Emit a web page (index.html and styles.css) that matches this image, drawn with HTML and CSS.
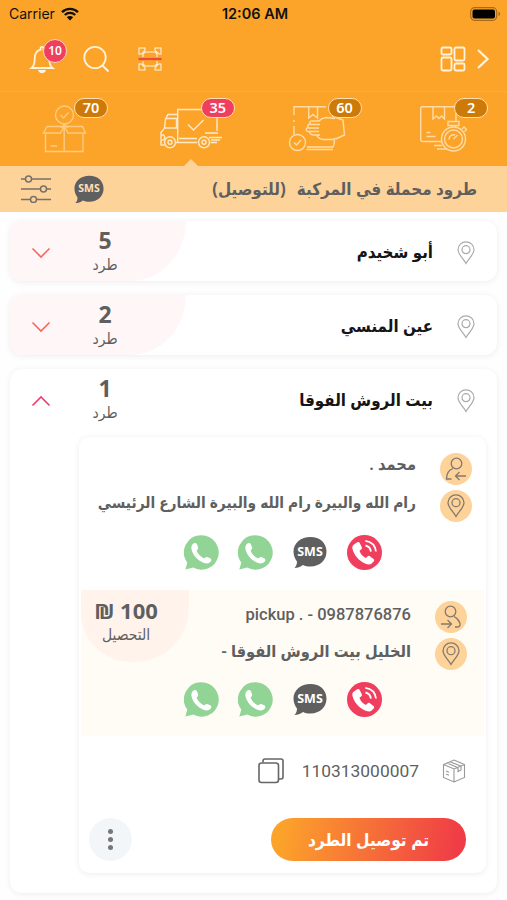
FILE: index.html
```html
<!DOCTYPE html>
<html lang="ar" dir="rtl">

<head>
    <meta charset="UTF-8">
    <meta name="viewport" content="width=device-width, initial-scale=1.0">
    <title>طرود محملة في المركبة</title>
    <link rel="stylesheet" href="styles.css">
</head>

<body>
    <!-- shared icons -->
    <svg class="sprite" width="0" height="0">
        <symbol id="pin" viewBox="0 0 18 24">
            <path d="M9 22.500C6 17.500 1 13 1 8.700a8 7.800 0 0 1 16 0C17 13 12 17.500 9 22.500z" />
            <circle cx="9" cy="8.700" r="4" />
        </symbol>
        <symbol id="sms" viewBox="0 0 34 34">
            <path d="M17.500 2C27 2 33.500 8 33.500 16.500S27 31.500 17.500 31.500c-3 0-5.300-.5-7.500-1.500-2.500 2-5.500 3-8.500 3 1.800-2 2.500-4 2.500-6.500C2 24 .5 20.500.5 16.500.5 8 8 2 17.500 2z" />
        </symbol>
        <symbol id="whatsapp" viewBox="0 0 35 35">
            <path fill="#92d396" d="M17.500.3a17.200 17.200 0 1 1-8.200 32.300L1.300 34.500l2-6.800A17.200 17.200 0 0 1 17.500.3z" />
            <path fill="#fff" d="M9.500 8.500c1.500-1 3-.4 3.600 1l1 3c.4 1.300-.8 2.200-1.500 3.200 1.500 3.500 4 6 7.500 7.800 1-.8 1.800-2 3.200-1.500l3 1.300c1.200.7 1.500 2 .5 3.200-1.700 2.200-4.500 2.400-7.300 1.200C14 25.500 9.500 21 7.800 15.500c-.9-3-.5-5.500 1.700-7z" />
        </symbol>
        <symbol id="call" viewBox="0 0 35 35">
            <circle cx="17.500" cy="17.500" r="17.500" fill="#ef3e5e" />
            <path fill="#fff" d="M7.300 9.300 10.300 7.200c1-.5 1.900-.2 2.400.8l2.100 4.200c.4 1 .1 1.700-.7 2.300l-1.600 1.200c1 3.200 3 5.500 6.300 7.200l1.700-1.500c.8-.7 1.600-.7 2.400-.1l3.600 2.700c.9.7.9 1.600.2 2.500l-2.300 2.300c-1.500 1.200-3.600.8-6.400-.4C11.500 25.500 7 20 5.500 14c-.5-2-.1-3.600 1.800-4.700z" />
            <path class="wave" d="M18.500 10.500c3 .7 5 3 5.400 6.200M18.300 5.800c6 .8 10 4.900 10.700 10.700" />
        </symbol>
    </svg>

    <header class="header">
        <div class="status-bar" dir="ltr">
            <div class="carrier">Carrier
                <svg width="18" height="14" viewBox="0 0 18 14">
                    <path d="M1 5.200a11.500 11.500 0 0 1 16 0M3.800 8a7.500 7.500 0 0 1 10.400 0" fill="none" stroke="#111" stroke-width="2.300" />
                    <path d="M9 13.500 5.800 10.300a4.600 4.600 0 0 1 6.400 0z" fill="#111" />
                </svg>
            </div>
            <div class="time">12:06 AM</div>
            <svg class="battery" width="31" height="14" viewBox="0 0 31 14">
                <rect x=".7" y=".7" width="26" height="12.600" rx="4" fill="none" stroke="#a86a17" stroke-width="1.200" />
                <rect x="2.500" y="2.500" width="22.500" height="9" rx="2" fill="#000" />
                <path d="M28.500 4.800v4.400c2-.6 2-3.800 0-4.400z" fill="#a86a17" />
            </svg>
        </div>

        <div class="toolbar">
            <svg class="line-icon back" width="14" height="22" viewBox="0 0 14 22">
                <path d="M2 2l9.500 9L2 20" />
            </svg>
            <svg class="line-icon grid" width="26" height="26" viewBox="0 0 26 26">
                <rect x="1.500" y="1.500" width="10" height="7" rx="1.500" />
                <rect x="1.500" y="11.500" width="10" height="13" rx="1.500" />
                <rect x="14.500" y="1.500" width="10" height="13" rx="1.500" />
                <rect x="14.500" y="17.500" width="10" height="7" rx="1.500" />
            </svg>
            <svg class="line-icon scan" width="26" height="26" viewBox="0 0 26 26">
                <path d="M2 8V2h6v2L4.500 8zM18 2h6v6h-2l-4-3.500zM2 18v6h6v-2l-3.500-4zM24 18v6h-6v-2l3.500-4zM6 11V8l2-2h10l2 2v3M6 15v3l2 2h10l2-2v-3" />
                <path class="scan-line" d="M1.500 13h23" />
            </svg>
            <svg class="line-icon search" width="28" height="28" viewBox="0 0 28 28">
                <circle cx="13" cy="12.500" r="10.700" />
                <path d="M20.500 20.500l6 6" />
            </svg>
            <div class="bell">
                <svg class="line-icon" width="26" height="30" viewBox="0 0 26 30">
                    <path d="M2.500 24c2.700-2 3.200-5 3.200-9.200 0-5 2-8.100 5.800-9.100V4.300c0-2 3-2 3 0v1.400c3.800 1 5.800 4.100 5.800 9.100 0 4.200.5 7.200 3.200 9.200z" />
                    <path d="M10.500 27c1 1.800 4 1.800 5 0z" />
                </svg>
                <span class="bell-count">10</span>
            </div>
        </div>

        <nav class="tabs">
            <div class="tab">
                <svg class="tab-icon" width="76" height="52" viewBox="0 0 76 52">
                    <path d="M35 39.500H17q-2.300 0-2.300-2.300V6.500q0-1.700 1.700-1.700H50V19M27 5v12l3.500-3 2.500 2.500 2.500-2.500 3 3V5M20.500 30.500h4M20.500 34.500h9M28 43.500h8M31 47h10M34.500 39.500H36" />
                    <circle cx="47.500" cy="37" r="12" />
                    <circle cx="47.500" cy="37" r="9" />
                    <path d="M42 19.500h11v4H42zM46 23.500v2M49.500 23.500v2M56 27l2-2 2.500 2.500-2 2M43 37.500a4.500 4.500 0 0 1 6-4.500M47.500 37l4-4" />
                </svg>
                <span class="badge">2</span>
            </div>
            <div class="tab">
                <svg class="tab-icon" width="76" height="52" viewBox="0 0 76 52">
                    <path d="M15 13V4.800h32M15 18v2M15 24v9M29.700 5v11l4.300-3.500 4.500 3.500V5M28 45h26q1.500-3 1.500-7M27.500 47.500H54" />
                    <circle cx="18.500" cy="40.500" r="8" />
                    <path d="M15 40.500l2.500 2.500 4.500-5M56 16.500l-9-1q-4.500.5-7 3.500h-8q-2.500 1.500 0 3.500h-2.500q-2 2 .5 3.500h-2q-2 2 .5 3.500h2q0 3 4 3.500h3q2 4 7 4.500h9l3-1M32 22.500h9M30 26h10M30 29.500h10M34 33h7" />
                    <path d="M53 14l11 4 1.500 15-9 4" />
                </svg>
                <span class="badge">60</span>
            </div>
            <div class="tab active">
                <svg class="tab-icon" width="76" height="52" viewBox="0 0 76 52">
                    <path d="M25.700 40V7.500H65V29M25.700 12.500H16L13.500 17 12.500 26 9 30.500V43h3.500M14 16.500h10.500v9.500H13M9 33h2.500q3 3-.5 5H9M24 40.500h21M27 36.500h18M58.500 40.500H65M53 31h13M57 35.500h13M59 38h9" />
                    <circle cx="18" cy="40.300" r="5.500" />
                    <circle cx="18" cy="40.300" r="2" />
                    <circle cx="52" cy="40.300" r="5.500" />
                    <circle cx="52" cy="40.300" r="2" />
                    <path d="M36 22.500l5.500 5.500 10-10" />
                </svg>
                <span class="badge">35</span>
            </div>
            <div class="tab">
                <svg class="tab-icon faded" width="76" height="52" viewBox="0 0 76 52">
                    <circle cx="39.500" cy="13" r="9" />
                    <path d="M35.500 13l3 3 5-5.500M20.500 31v18.500h37.500V31M39.200 24v25.500M22 24.500h35.500l3 6.500H43l-3.800-6.500L35.500 31H18.500zM36 26l3.500-4 3.500 4M25.500 44H32" />
                </svg>
                <span class="badge">70</span>
            </div>
        </nav>
    </header>

    <div class="title-bar">
        <h1><span>طرود محملة في المركبة</span><span>(للتوصيل)</span></h1>
        <div class="sms small">
            <svg width="30" height="30"><use href="#sms" /></svg>
            <span>SMS</span>
        </div>
        <svg class="filter" width="32" height="28" viewBox="0 0 32 28">
            <path d="M1 4h4.500M11.500 4H31M1 14h19.500M26.500 14H31M1 24.500h9.500M16.500 24.500H31" />
            <circle cx="8.500" cy="4" r="3" />
            <circle cx="23.500" cy="14" r="3" />
            <circle cx="13.500" cy="24.500" r="3" />
        </svg>
    </div>

    <main class="list">
        <section class="card closed">
            <div class="card-row">
                <svg class="pin" width="18" height="24"><use href="#pin" /></svg>
                <h2>أبو شخيدم</h2>
                <div class="count"><b>5</b><span>طرد</span></div>
                <svg class="arrow" width="20" height="12" viewBox="0 0 20 12"><path d="M1.500 1.500L10 10l8.500-8.500" /></svg>
            </div>
        </section>

        <section class="card closed">
            <div class="card-row">
                <svg class="pin" width="18" height="24"><use href="#pin" /></svg>
                <h2>عين المنسي</h2>
                <div class="count"><b>2</b><span>طرد</span></div>
                <svg class="arrow" width="20" height="12" viewBox="0 0 20 12"><path d="M1.500 1.500L10 10l8.500-8.500" /></svg>
            </div>
        </section>

        <section class="card">
            <div class="card-row">
                <svg class="pin" width="18" height="24"><use href="#pin" /></svg>
                <h2>بيت الروش الفوقا</h2>
                <div class="count"><b>1</b><span>طرد</span></div>
                <svg class="arrow up" width="20" height="12" viewBox="0 0 20 12"><path d="M1.500 10.500L10 2l8.500 8.500" /></svg>
            </div>

            <div class="parcel">
                <div class="party receiver">
                    <div class="line">
                        <div class="round">
                            <svg width="24" height="26" viewBox="0 0 24 26">
                                <circle cx="12.500" cy="7.500" r="5.300" />
                                <path d="M9 12.500C4.500 14 2.500 18 2.500 23h5M22 20H11.500M15.500 16l-4 4 4 4" />
                            </svg>
                        </div>
                        <p class="name">محمد .</p>
                    </div>
                    <div class="line">
                        <div class="round"><svg width="18" height="24"><use href="#pin" /></svg></div>
                        <p class="address">رام الله والبيرة رام الله والبيرة الشارع الرئيسي</p>
                    </div>
                    <div class="actions">
                        <svg width="35" height="35"><use href="#call" /></svg>
                        <div class="sms">
                            <svg width="34" height="34"><use href="#sms" /></svg>
                            <span>SMS</span>
                        </div>
                        <svg width="35" height="35"><use href="#whatsapp" /></svg>
                        <svg width="35" height="35"><use href="#whatsapp" /></svg>
                    </div>
                </div>

                <div class="party sender">
                    <div class="amount"><b dir="ltr">₪ 100</b><span>التحصيل</span></div>
                    <div class="line">
                        <div class="round">
                            <svg width="24" height="26" viewBox="0 0 24 26">
                                <circle cx="11.500" cy="7.500" r="5.300" />
                                <path d="M15 12.500c6 3 8 10 4 10.500h-3M2 20h10.500M8.500 16l4 4-4 4" />
                            </svg>
                        </div>
                        <p class="phone" dir="ltr">pickup . - 0987876876</p>
                    </div>
                    <div class="line">
                        <div class="round"><svg width="18" height="24"><use href="#pin" /></svg></div>
                        <p>الخليل بيت الروش الفوقا -</p>
                    </div>
                    <div class="actions">
                        <svg width="35" height="35"><use href="#call" /></svg>
                        <div class="sms">
                            <svg width="34" height="34"><use href="#sms" /></svg>
                            <span>SMS</span>
                        </div>
                        <svg width="35" height="35"><use href="#whatsapp" /></svg>
                        <svg width="35" height="35"><use href="#whatsapp" /></svg>
                    </div>
                </div>

                <div class="barcode">
                    <svg class="box" width="24" height="24" viewBox="0 0 24 24">
                        <path d="M12 1l10.500 4.500v13L12 23 1.500 18.500v-13zM1.500 5.500L12 10l10.500-4.500M12 10v13M5 4l10.500 4.500M8 2.700L18.500 7M16 8.500v4l3-1.500V7M4 12l3 1.200M4 15l3 1.200" />
                    </svg>
                    <span>110313000007</span>
                    <svg class="copy" width="26" height="26" viewBox="0 0 26 26">
                        <rect x="1" y="5" width="19.500" height="19.500" rx="2.500" />
                        <path d="M5 4.500V3q0-2 2-2h16q2 0 2 2v16q0 2-2 2h-2" />
                    </svg>
                </div>

                <div class="footer">
                    <button class="btn">تم توصيل الطرد</button>
                    <button class="more"><i></i><i></i><i></i></button>
                </div>
            </div>
        </section>
    </main>
</body>

</html>
```
FILE: styles.css
```css
:root {
    --orange: #fca42a;
    --peach: #fed399;
    --grey: #5f5f60;
    --red: #ef3e5e;
}

* {
    box-sizing: border-box;
}

body {
    margin: 0;
    height: 900px;
    overflow: hidden;
    background-color: #fefefe;
    color: var(--grey);
    font-family: "Noto Sans", "DejaVu Sans Condensed", "DejaVu Sans", sans-serif;
}

h1,
h2,
p {
    margin: 0;
}

svg {
    display: block;
    flex-shrink: 0;
}

.sprite {
    position: absolute;
}

/* header */
.header {
    height: 166px;
    background-color: var(--orange);
}

.status-bar {
    height: 27px;
    padding: 0 6px 0 9px;
    display: flex;
    align-items: center;
    justify-content: space-between;
    color: #111;
    font-family: Inter, sans-serif;
    font-size: 14px;
}

.carrier {
    width: 100px;
    display: flex;
    align-items: center;
    gap: 6px;
}

.time {
    font-size: 14.5px;
    font-weight: 600;
}

.status-bar .battery {
    margin-left: 69px;
}

.toolbar {
    height: 65px;
    padding: 0 17px 0 29px;
    display: flex;
    align-items: center;
    border-bottom: 1px solid #fdac3e;
}

.line-icon {
    fill: none;
    stroke: #fff3dc;
    stroke-width: 1.8;
}

.back {
    stroke-width: 2.3;
}

.grid {
    margin-right: 10px;
}

.scan {
    margin-right: auto;
    stroke-width: 1.1;
}

.scan-line {
    stroke: #f0483e;
    stroke-width: 2.2;
}

.search {
    margin-right: 27px;
}

.bell {
    position: relative;
    margin-right: 27px;
}

.bell-count {
    position: absolute;
    left: 14px;
    top: -5px;
    width: 24px;
    height: 24px;
    border: 1.5px solid #ffd9c0;
    border-radius: 50%;
    background-color: var(--red);
    color: #fff;
    font-size: 12px;
    font-weight: 600;
    line-height: 21px;
    text-align: center;
}

.tabs {
    display: flex;
    height: 74px;
}

.tab {
    flex: 1;
    display: flex;
    justify-content: center;
    padding-top: 10px;
    position: relative;
}

.tab-icon {
    fill: none;
    stroke: #ffdca6;
    stroke-width: 1.4;
}

.active .tab-icon {
    stroke: #ffe9c8;
}

.tab-icon.faded {
    stroke: #fecb80;
}

.badge {
    position: absolute;
    left: 74px;
    top: 6px;
    width: 34px;
    height: 20px;
    border: 1.5px solid #ffe0ae;
    border-radius: 10px;
    background-color: #cd7a08;
    color: #fff;
    font-size: 14.5px;
    font-weight: 600;
    line-height: 17px;
    text-align: center;
}

.active .badge {
    background-color: var(--red);
}

.active::after {
    content: '';
    position: absolute;
    bottom: 0;
    left: 57px;
    border: 7px solid transparent;
    border-top: 0;
    border-bottom-color: var(--peach);
}

/* title bar */
.title-bar {
    height: 46px;
    padding: 0 30px 0 20px;
    display: flex;
    align-items: center;
    background-color: var(--peach);
}

.title-bar h1 {
    display: flex;
    gap: 11px;
    margin-left: auto;
    font-size: 16.9px;
    line-height: 24px;
}

.filter {
    margin-right: 22px;
    fill: none;
    stroke: #77716b;
    stroke-width: 1.5;
}

.sms {
    position: relative;
    width: 35px;
    fill: #5f5f60;
}

.actions .sms svg {
    margin-right: 1px;
}

.sms span {
    position: absolute;
    left: 0;
    top: 0;
    width: 35px;
    color: #fff;
    font-size: 12.5px;
    font-weight: 700;
    line-height: 33px;
    text-align: center;
}

.sms.small {
    width: 30px;
}

.small span {
    width: 30px;
    color: #fee0b8;
    font-size: 10.5px;
    line-height: 29px;
}

/* cards */
.list {
    padding: 9px 10px 0;
}

.card {
    margin-bottom: 14px;
    border-radius: 12px;
    background-color: #fff;
    box-shadow: 0 1px 6px rgba(0, 0, 0, 0.07);
    overflow: hidden;
}

.card-row {
    height: 60px;
    padding: 0 22px 0 21px;
    display: flex;
    align-items: center;
    position: relative;
}

.closed .card-row::before {
    content: '';
    position: absolute;
    left: 0;
    top: 0;
    width: 176px;
    height: 60px;
    border-bottom-right-radius: 60px 65px;
    background-color: #fff7f7;
}

.pin {
    margin-top: 3px;
    fill: none;
    stroke: #aaa;
    stroke-width: 1.2;
}

.card h2 {
    flex: 1;
    margin-right: 24px;
    color: #151515;
    font-size: 16.8px;
}

.count {
    width: 60px;
    display: flex;
    flex-direction: column;
    align-items: center;
    position: relative;
}

.count b {
    font-size: 23px;
    line-height: 26px;
}

.count span {
    font-size: 15.5px;
    line-height: 23px;
}

.arrow {
    margin-top: 3px;
    margin-right: 24px;
    position: relative;
    fill: none;
    stroke: #f8665c;
    stroke-width: 1.6;
}

.arrow.up {
    stroke: #ea3e70;
}

/* parcel */
.parcel {
    margin: 8px 11px 20px 69px;
    height: 436px;
    border-radius: 10px;
    box-shadow: 0 1px 6px rgba(0, 0, 0, 0.08);
    overflow: hidden;
}

.party {
    position: relative;
}

.receiver {
    height: 153px;
    padding: 16px 14px 0 0;
}

.sender {
    height: 146px;
    margin: 0 2px;
    padding: 11px 17px 0 0;
    background-color: #fffcf5;
}

.line {
    display: flex;
    align-items: center;
    gap: 24px;
    height: 32px;
    margin-bottom: 5px;
}

.round {
    width: 32px;
    height: 32px;
    border-radius: 50%;
    background-color: var(--peach);
    display: flex;
    align-items: center;
    justify-content: center;
    fill: none;
    stroke: #85796d;
    stroke-width: 1.3;
}

.line p {
    font-size: 16.3px;
    font-weight: 600;
    line-height: 24px;
    padding-bottom: 6px;
    white-space: nowrap;
}

.line .name {
    padding-bottom: 11px;
}

.line .address {
    padding-bottom: 9px;
    font-size: 15.35px;
}

.line .phone {
    padding-bottom: 4px;
    font-family: Roboto, sans-serif;
    font-size: 16.5px;
    font-weight: 500;
}

.actions {
    display: flex;
    gap: 19.5px;
    margin-top: 13px;
    padding-right: 90px;
}

.sender .actions {
    margin-top: 12px;
    padding-right: 85px;
}

.wave {
    fill: none;
    stroke: #fff;
    stroke-width: 1.8;
}

.amount {
    position: absolute;
    left: 0;
    top: 0;
    width: 108px;
    height: 72px;
    padding: 6px 18px 0 0;
    border-radius: 0 0 55px 50px;
    background-color: #fff3ec;
    display: flex;
    flex-direction: column;
    align-items: center;
}

.amount b {
    font-size: 22px;
    line-height: 28px;
    white-space: nowrap;
}

.amount span {
    font-size: 15.5px;
    line-height: 20px;
}

.barcode {
    height: 70px;
    padding-right: 20px;
    display: flex;
    align-items: center;
    font-family: Roboto, sans-serif;
    font-size: 17.4px;
}

.box {
    fill: none;
    stroke: #999;
    stroke-width: 1.1;
    margin-left: 23px;
}

.copy {
    margin-right: 18px;
    fill: none;
    stroke: #666;
    stroke-width: 1.6;
}

.footer {
    padding: 12px 20px 0 10px;
    display: flex;
    align-items: center;
    justify-content: space-between;
}

.btn {
    width: 195px;
    height: 43px;
    border: 0;
    border-radius: 22px;
    background: linear-gradient(100deg, #fca42a 5%, #f03c46 95%);
    color: #fff;
    font-family: inherit;
    font-size: 17.2px;
    font-weight: 600;
    cursor: pointer;
}

.more {
    width: 43px;
    height: 43px;
    padding: 0;
    border: 0;
    border-radius: 50%;
    background-color: #f3f6f8;
    display: flex;
    flex-direction: column;
    align-items: center;
    justify-content: center;
    gap: 3px;
}

.more i {
    width: 5px;
    height: 5px;
    border-radius: 50%;
    background-color: #777;
}
```
